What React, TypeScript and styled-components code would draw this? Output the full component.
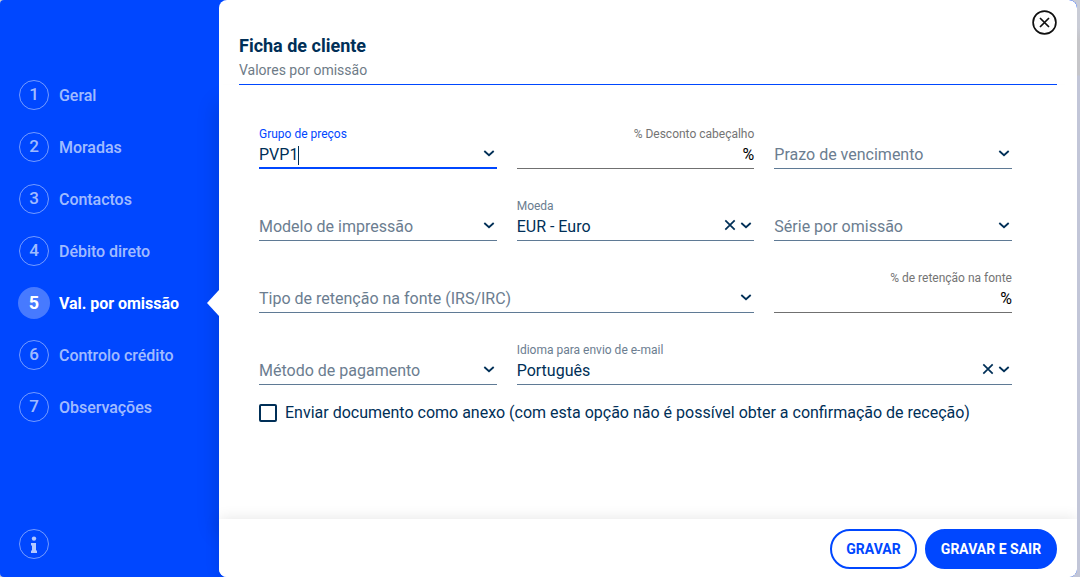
import React from "react";
import styled, { createGlobalStyle, css } from "styled-components";

const BLUE = "#0047ff";
const NAVY = "#002f57";
const SLATE = "#6b7d90";

const GlobalStyle = createGlobalStyle`
  * { box-sizing: border-box; }
  body { margin: 0; overflow: hidden; font-family: Roboto, sans-serif; color: ${NAVY}; }
  button { font-family: inherit; cursor: pointer; }
`;

const Backdrop = styled.div`
  width: 1080px;
  height: 577px;
  background: linear-gradient(#c9ccd6 0 27px, #c5c5c9 40px 75px, #c2c6d8 76px 100%);
`;

const Dialog = styled.div`
  display: flex;
  width: 1077px;
  height: 577px;
  background: ${BLUE};
  border-radius: 4px 8px 8px 4px;
  overflow: hidden;
`;

const Sidebar = styled.aside`
  display: flex;
  flex-direction: column;
  justify-content: space-between;
  width: 219px;
  padding: 69px 0 17px 18px;
`;

const Steps = styled.nav`
  display: flex;
  flex-direction: column;
`;

const Step = styled.a<{ $active?: boolean }>`
  display: flex;
  align-items: center;
  justify-content: space-between;
  height: 52px;
  font-size: 16px;
  line-height: 20px;
  letter-spacing: -0.04px;
  font-weight: ${(p) => (p.$active ? 700 : 500)};
  color: ${(p) => (p.$active ? "#fff" : "rgba(255,255,255,.65)")};
  white-space: nowrap;
`;

const StepMain = styled.span`
  display: flex;
  align-items: center;
  gap: 9px;
`;

const StepName = styled.span`
  padding-top: 2px;
`;

const Badge = styled.span<{ $active?: boolean }>`
  display: flex;
  align-items: center;
  justify-content: center;
  width: 30px;
  height: 30px;
  margin: 1px;
  padding-bottom: 2px;
  border: 1px solid rgba(255, 255, 255, 0.45);
  border-radius: 50%;
  font-size: 17px;
  font-weight: 500;
  ${(p) =>
    p.$active &&
    css`
      width: 32px;
      height: 32px;
      margin: 0;
      padding-bottom: 0;
      border: 0;
      background: rgba(255, 255, 255, 0.28);
      font-size: 18px;
      font-weight: 700;
    `}
`;

const Pointer = styled.span`
  width: 12px;
  height: 26px;
  background: #fff;
  clip-path: polygon(100% 0, 0 50%, 100% 100%);
`;

const Panel = styled.main`
  display: flex;
  flex-direction: column;
  width: 858px;
  background: #fff;
  border-radius: 8px;
`;

const Header = styled.header`
  position: relative;
  z-index: 1;
  height: 85px;
  margin: 0 20px;
  padding-top: 35px;
  border-bottom: 1px solid ${BLUE};
  background: #fff;
`;

const Title = styled.h1`
  margin: 0;
  font-size: 18px;
  line-height: 22px;
  font-weight: 700;
`;

const Subtitle = styled.p`
  margin: 5px 0 0;
  font-size: 14px;
  line-height: 16px;
  color: #6e7b87;
`;

const Close = styled.button`
  position: absolute;
  top: 10px;
  right: 0;
  display: flex;
  padding: 0;
  border: 0;
  background: none;
`;

const Form = styled.form`
  flex: 1;
  padding: 40px 65px 0 40px;
  box-shadow: -4px 16px 20px -2px rgba(0, 0, 0, 0.14);
`;

const Fields = styled.div`
  display: grid;
  grid-template-columns: repeat(3, 1fr);
  grid-auto-rows: 44px;
  gap: 28px 20px;
`;

const FieldBox = styled.div<{ $span?: number; $line: string; $focus?: boolean }>`
  grid-column: span ${(p) => p.$span ?? 1};
  display: flex;
  flex-direction: column;
  border-bottom: ${(p) => (p.$focus ? 2 : 1)}px solid ${(p) => p.$line};
`;

const Label = styled.label<{ $color: string; $right?: boolean }>`
  height: 18px;
  font-size: 12px;
  line-height: 18px;
  text-align: ${(p) => (p.$right ? "right" : "left")};
  color: ${(p) => p.$color};
`;

const Control = styled.div<{ $color: string; $right?: boolean }>`
  display: flex;
  align-items: center;
  justify-content: ${(p) => (p.$right ? "flex-end" : "space-between")};
  height: 24px;
  font-size: 16px;
  line-height: 24px;
  white-space: nowrap;
  color: ${(p) => p.$color};
`;

const Value = styled.span`
  display: flex;
  align-items: center;
`;

const Caret = styled.span`
  width: 1px;
  height: 19px;
  background: ${NAVY};
`;

const Actions = styled.span`
  display: flex;
  align-items: center;
  gap: 4px;
  padding: 0 2px 4px 0;
`;

const CheckRow = styled.label`
  display: flex;
  align-items: center;
  gap: 8px;
  margin-top: 18px;
  font-size: 16px;
  line-height: 20px;
`;

const CheckBox = styled.span`
  width: 18px;
  height: 18px;
  border: 2px solid ${NAVY};
  border-radius: 2px;
`;

const Footer = styled.footer`
  display: flex;
  justify-content: flex-end;
  gap: 8px;
  height: 58px;
  padding: 10px 20px 0;
  background: #fff;
  border-radius: 0 0 8px 8px;
  box-shadow: 0 0 15px rgba(0, 0, 0, 0.11);
`;

const Button = styled.button<{ $primary?: boolean }>`
  width: ${(p) => (p.$primary ? 132 : 87)}px;
  height: 40px;
  padding: 0;
  border: 2px solid ${BLUE};
  border-radius: 20px;
  background: ${(p) => (p.$primary ? BLUE : "#fff")};
  color: ${(p) => (p.$primary ? "#fff" : BLUE)};
  font-size: 14px;
  font-weight: 700;
`;

const Chevron = () => (
  <svg width="12" height="12" viewBox="0 0 12 12" fill="none" stroke={NAVY} strokeWidth="1.8">
    <path d="M1.3 4 6 8.2 10.7 4" />
  </svg>
);

const Clear = () => (
  <svg width="12" height="12" viewBox="0 0 12 12" fill="none" stroke={NAVY} strokeWidth="1.7">
    <path d="m1.3 1.3 9.4 9.4m0-9.4-9.4 9.4" />
  </svg>
);

const InfoIcon = () => (
  <svg width="8" height="17" viewBox="0 0 8 17" fill="rgba(255,255,255,.7)">
    <circle cx="4" cy="2.6" r="2.2" />
    <path d="M1 7h5v7.4h1V17H1v-2.6h1V9.6H1z" />
  </svg>
);

const InfoBadge = styled(Badge)`
  padding-bottom: 0;
`;

interface FieldProps {
  label?: string;
  value?: string;
  placeholder?: string;
  span?: number;
  focus?: boolean;
  clearable?: boolean;
  percent?: boolean;
}

function Field({ label, value, placeholder, span, focus, clearable, percent }: FieldProps) {
  const line = focus ? BLUE : percent ? "#707070" : "#5f7a95";
  const labelColor = focus ? BLUE : percent ? "#747474" : SLATE;
  return (
    <FieldBox $span={span} $line={line} $focus={focus}>
      <Label $color={labelColor} $right={percent}>{label}</Label>
      {percent ? (
        <Control $color="#000" $right>%</Control>
      ) : (
        <Control $color={value ? NAVY : SLATE}>
          <Value>
            {value ?? placeholder}
            {focus && <Caret />}
          </Value>
          <Actions>
            {clearable && <Clear />}
            <Chevron />
          </Actions>
        </Control>
      )}
    </FieldBox>
  );
}

const steps = ["Geral", "Moradas", "Contactos", "Débito direto", "Val. por omissão", "Controlo crédito", "Observações"];
const current = 4;

export default function App() {
  return (
    <Backdrop>
      <GlobalStyle />
      <Dialog>
        <Sidebar>
          <Steps>
            {steps.map((name, i) => (
              <Step key={name} $active={i === current}>
                <StepMain>
                  <Badge $active={i === current}>{i + 1}</Badge>
                  <StepName>{name}</StepName>
                </StepMain>
                {i === current && <Pointer />}
              </Step>
            ))}
          </Steps>
          <InfoBadge>
            <InfoIcon />
          </InfoBadge>
        </Sidebar>
        <Panel>
          <Header>
            <Title>Ficha de cliente</Title>
            <Subtitle>Valores por omissão</Subtitle>
            <Close type="button" aria-label="Fechar">
              <svg width="25" height="25" viewBox="0 0 25 25" fill="none" stroke="#111" strokeWidth="1.7">
                <circle cx="12.5" cy="12.5" r="11.4" />
                <path d="m8 8 9 9m0-9-9 9" />
              </svg>
            </Close>
          </Header>
          <Form>
            <Fields>
              <Field label="Grupo de preços" value="PVP1" focus />
              <Field label="% Desconto cabeçalho" percent />
              <Field placeholder="Prazo de vencimento" />
              <Field placeholder="Modelo de impressão" />
              <Field label="Moeda" value="EUR - Euro" clearable />
              <Field placeholder="Série por omissão" />
              <Field placeholder="Tipo de retenção na fonte (IRS/IRC)" span={2} />
              <Field label="% de retenção na fonte" percent />
              <Field placeholder="Método de pagamento" />
              <Field label="Idioma para envio de e-mail" value="Português" span={2} clearable />
            </Fields>
            <CheckRow>
              <CheckBox />
              Enviar documento como anexo (com esta opção não é possível obter a confirmação de receção)
            </CheckRow>
          </Form>
          <Footer>
            <Button type="button">GRAVAR</Button>
            <Button type="button" $primary>GRAVAR E SAIR</Button>
          </Footer>
        </Panel>
      </Dialog>
    </Backdrop>
  );
}
